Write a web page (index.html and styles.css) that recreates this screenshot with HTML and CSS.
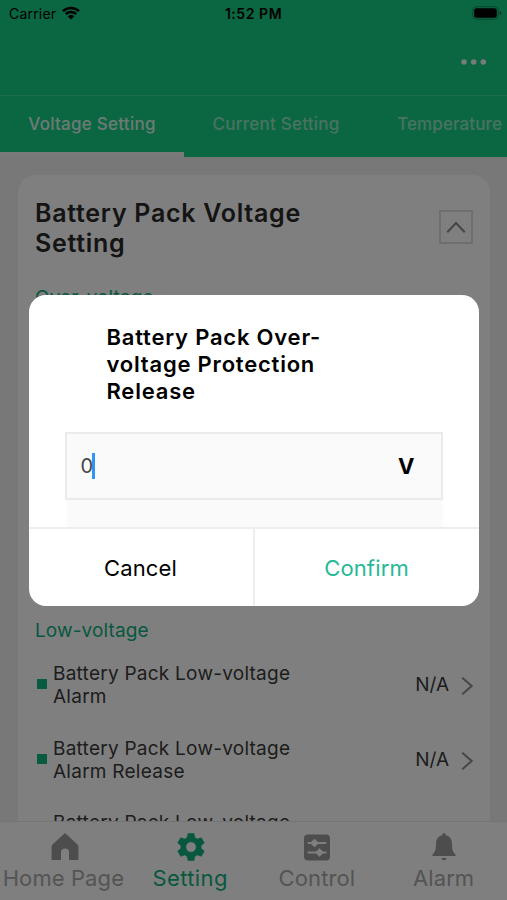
FILE: index.html
```html
<!DOCTYPE html>
<html lang="en">
<head>
<meta charset="utf-8">
<title>Voltage Setting</title>
<link rel="stylesheet" href="styles.css">
</head>
<body>
<div class="screen">
  <header class="header">
    <div class="status">
      <div class="status-left"><span class="carrier">Carrier</span>
        <svg class="wifi" viewBox="0 0 18 14" width="18" height="14"><path d="M1 5.200a11.500 11.500 0 0 1 16 0M3.800 8a7.600 7.600 0 0 1 10.400 0" fill="none" stroke="#000" stroke-width="2.500"/><path d="M9 13.600 5.700 10.300a4.800 4.800 0 0 1 6.600 0z"/></svg>
      </div>
      <span class="time">1:52 PM</span>
      <div class="status-right">
        <svg viewBox="0 0 30 14" width="30" height="14"><rect x=".7" y=".7" width="25.600" height="12.600" rx="3.800" fill="none" stroke="#000" stroke-opacity=".3"/><rect x="2.200" y="2.200" width="22.600" height="9.600" rx="2.400"/><path d="M27.800 4.800v4.400q1.600-.7 1.600-2.200t-1.600-2.200z" opacity=".4"/></svg>
      </div>
    </div>
    <div class="toolbar"><svg viewBox="0 0 26 6" width="26" height="6" fill="#fff" opacity=".9"><circle cx="3" cy="3" r="2.800"/><circle cx="12.700" cy="3" r="2.800"/><circle cx="22.300" cy="3" r="2.800"/></svg></div>
    <nav class="tabs">
      <div class="tab active"><span>Voltage Setting</span></div>
      <div class="tab"><span>Current Setting</span></div>
      <div class="tab last"><span>Temperature</span></div>
    </nav>
  </header>
  <main class="content">
    <section class="card">
      <div class="card-head">
        <h1>Battery Pack Voltage Setting</h1>
        <div class="collapse"><svg viewBox="0 0 20 12" width="20" height="12"><path d="M1.300 11.200 10 2l8.700 9.200"/></svg></div>
      </div>
      <h2>Over-voltage</h2>
      <div class="over-items"></div>
      <h2>Low-voltage</h2>
      <div class="item"><i class="bullet"></i><p>Battery Pack Low-voltage Alarm</p><span class="value">N/A</span><svg class="chev" viewBox="0 0 12 18" width="12" height="18"><path d="M1.200.8 10.700 9l-9.500 8.200"/></svg></div>
      <div class="item"><i class="bullet"></i><p>Battery Pack Low-voltage Alarm Release</p><span class="value">N/A</span><svg class="chev" viewBox="0 0 12 18" width="12" height="18"><path d="M1.200.8 10.700 9l-9.500 8.200"/></svg></div>
      <div class="item partial"><p>Battery Pack Low-voltage</p></div>
    </section>
  </main>
  <footer class="bottom">
    <div class="nav home"><svg viewBox="0 0 28 28" width="28" height="28"><path d="M14 0 26.500 11.500q.9.800.9 2V27H18v-7.500a4 4 0 0 0-8 0V27H.6V13.500q0-1.200.9-2z"/></svg><span>Home Page</span></div>
    <div class="nav selected"><svg viewBox="0 0 28 28" width="28" height="28"><path fill-rule="evenodd" stroke-linejoin="round" d="M11 .5h6l.8 4.100 2.500 1.500 4-1.400 3 5.200-3.200 2.700v2.800l3.200 2.700-3 5.200-4-1.400-2.500 1.500-.8 4.100h-6l-.8-4.100-2.500-1.500-4 1.400-3-5.200 3.200-2.700v-2.800L.7 9.900l3-5.200 4 1.400 2.500-1.500zM14 8.800a5.200 5.200 0 1 0 0 10.400 5.200 5.200 0 0 0 0-10.400z"/></svg><span>Setting</span></div>
    <div class="nav control"><svg viewBox="0 0 28 28" width="28" height="28"><rect x="1" y="1.500" width="26" height="26" rx="4"/><path d="M5.500 10h17M5.500 19.500h17" stroke="#fff" stroke-width="2" stroke-linecap="round"/><path d="m7.500 10 4-4 4 4-4 4zM12.500 19.500l4-4 4 4-4 4z" fill="#fff" stroke="#fff" stroke-linejoin="round" stroke-width=".6"/></svg><span>Control</span></div>
    <div class="nav alarm"><svg viewBox="0 0 28 28" width="28" height="28"><path d="M14 0q1.700 0 1.800 2.200C20.500 3.200 22 7 22 11c0 6 1 8 3.500 10.500V23H2.500v-1.500C5 19 6 17 6 11c0-4 1.500-7.800 6.200-8.800Q12.300 0 14 0zM11.300 25h5.400q-.6 2.300-2.700 2.300T11.300 25z"/></svg><span>Alarm</span></div>
  </footer>
  <div class="overlay">
    <div class="dialog">
      <div class="dialog-title">Battery Pack Over-voltage Protection Release</div>
      <div class="field"><span class="entry">0</span><i class="caret"></i><b>V</b></div>
      <div class="field-shade"></div>
      <div class="actions"><div class="cancel">Cancel</div><div class="confirm">Confirm</div></div>
    </div>
  </div>
</div>
</body>
</html>
```
FILE: styles.css
```css
* { box-sizing: border-box; }
body { margin: 0; font-family: Inter, "Liberation Sans", sans-serif; }
svg { display: block; flex: none; }
h1, h2, p { margin: 0; }
.screen { position: relative; width: 507px; height: 900px; display: flex; flex-direction: column; overflow: hidden; background: #f0f1f1; }
.header { flex: none; height: 157px; background: #16cc84; }
.status { height: 27px; display: grid; grid-template-columns: 1fr auto 1fr; align-items: center; padding: 0 5px 0 9px; }
.status-left { display: flex; align-items: center; gap: 6px; padding-bottom: 1px; }
.carrier { font-size: 14px; font-weight: 400; letter-spacing: .2px; }
.time { font-size: 14px; font-weight: 600; letter-spacing: .55px; margin-right: 4px; }
.status-right { display: flex; justify-content: flex-end; padding-bottom: 1px; }
.toolbar { height: 69px; display: flex; justify-content: flex-end; align-items: center; padding: 1px 20px 0 0; border-bottom: 1px solid #3bd89a; }
.tabs { height: 61px; display: flex; overflow: hidden; }
.tab { flex: none; width: 184px; display: flex; justify-content: center; padding-top: 17px; color: rgba(255,255,255,.55); font-size: 17px; line-height: 22px; font-weight: 550; letter-spacing: .25px; }
.tab.last { width: 139px; justify-content: flex-end; padding-right: 5px; letter-spacing: .1px; }
.tab.active { color: rgba(255,255,255,.86); border-bottom: 5px solid #f3f3f3; }
.content { flex: none; height: 664px; padding: 18px 17px 0 18px; overflow: hidden; }
.card { height: 760px; background: #fff; border-radius: 18px; padding: 23px 17px 0; }
.card-head { display: flex; justify-content: space-between; height: 76px; }
h1 { width: 300px; font-size: 25px; line-height: 30px; font-weight: 640; letter-spacing: .72px; color: #292929; }
.collapse { width: 34px; height: 34px; margin-top: 12px; border: 2px solid #dcdcdc; display: flex; justify-content: center; align-items: center; }
.collapse path, .chev path { fill: none; stroke: #8c8c8c; stroke-width: 2; }
h2 { font-size: 19px; line-height: 24px; font-weight: 400; letter-spacing: .12px; color: #10b181; margin-top: 12px; }
.over-items { height: 297px; }
.item { display: flex; align-items: center; height: 46px; margin-bottom: 28.500px; }
h2 + .item { margin-top: 19px; }
.item.partial { align-items: flex-start; padding-left: 18px; }
.bullet { width: 10px; height: 10px; margin: -2px 6px 0 2px; background: #10b783; }
.item p { width: 270px; font-size: 19px; line-height: 23px; letter-spacing: .25px; color: #3b3b3b; }
.value { margin: -1px -1px 0 auto; font-size: 19px; color: #3b3b3b; }
.chev { margin: 2px 0 0 13px; }
.bottom { flex: none; height: 79px; display: grid; grid-template-columns: repeat(4, 1fr); background: #fff; border-top: 1px solid #e7eaea; }
.nav { display: flex; flex-direction: column; align-items: center; padding-top: 11px; color: #a8a8a8; font-size: 22px; line-height: 28px; letter-spacing: .1px; white-space: nowrap; }
.nav span { margin-top: 3px; }
.nav svg { fill: #9b9b9b; }
.home svg { margin-left: 3px; }
.nav.selected { color: #10b181; letter-spacing: .4px; }
.nav.selected svg { fill: #10b181; stroke: #10b181; stroke-width: .6; margin-left: 1px; }
.overlay { position: absolute; inset: 0; background: rgba(0,0,0,.5); display: flex; align-items: flex-start; justify-content: center; padding-top: 295px; }
.dialog { width: 450px; height: 311px; background: #fff; border-radius: 17px; overflow: hidden; }
.dialog-title { width: 250px; height: 137px; margin-left: 78px; padding-top: 29px; font-size: 22px; line-height: 27px; font-weight: 640; letter-spacing: .79px; }
.field { width: 378px; height: 68px; margin-left: 36px; border: 2px solid #ebebeb; background: #fafafa; display: flex; align-items: center; padding: 0 26px 0 14px; font-size: 20px; }
.entry { width: 11px; color: #444; letter-spacing: -.5px; }
.caret { width: 3px; height: 26px; background: #2e94f5; }
.field b { margin-left: auto; font-size: 22px; font-weight: 700; }
.field-shade { width: 376px; height: 27px; margin-left: 38px; background: #fafafa; }
.actions { height: 79px; display: grid; grid-template-columns: 226px 1fr; border-top: 2px solid #eee; font-size: 22px; line-height: 78px; text-align: center; }
.cancel { border-right: 2px solid #eee; letter-spacing: .15px; }
.confirm { color: #26b995; letter-spacing: .15px; }
```
